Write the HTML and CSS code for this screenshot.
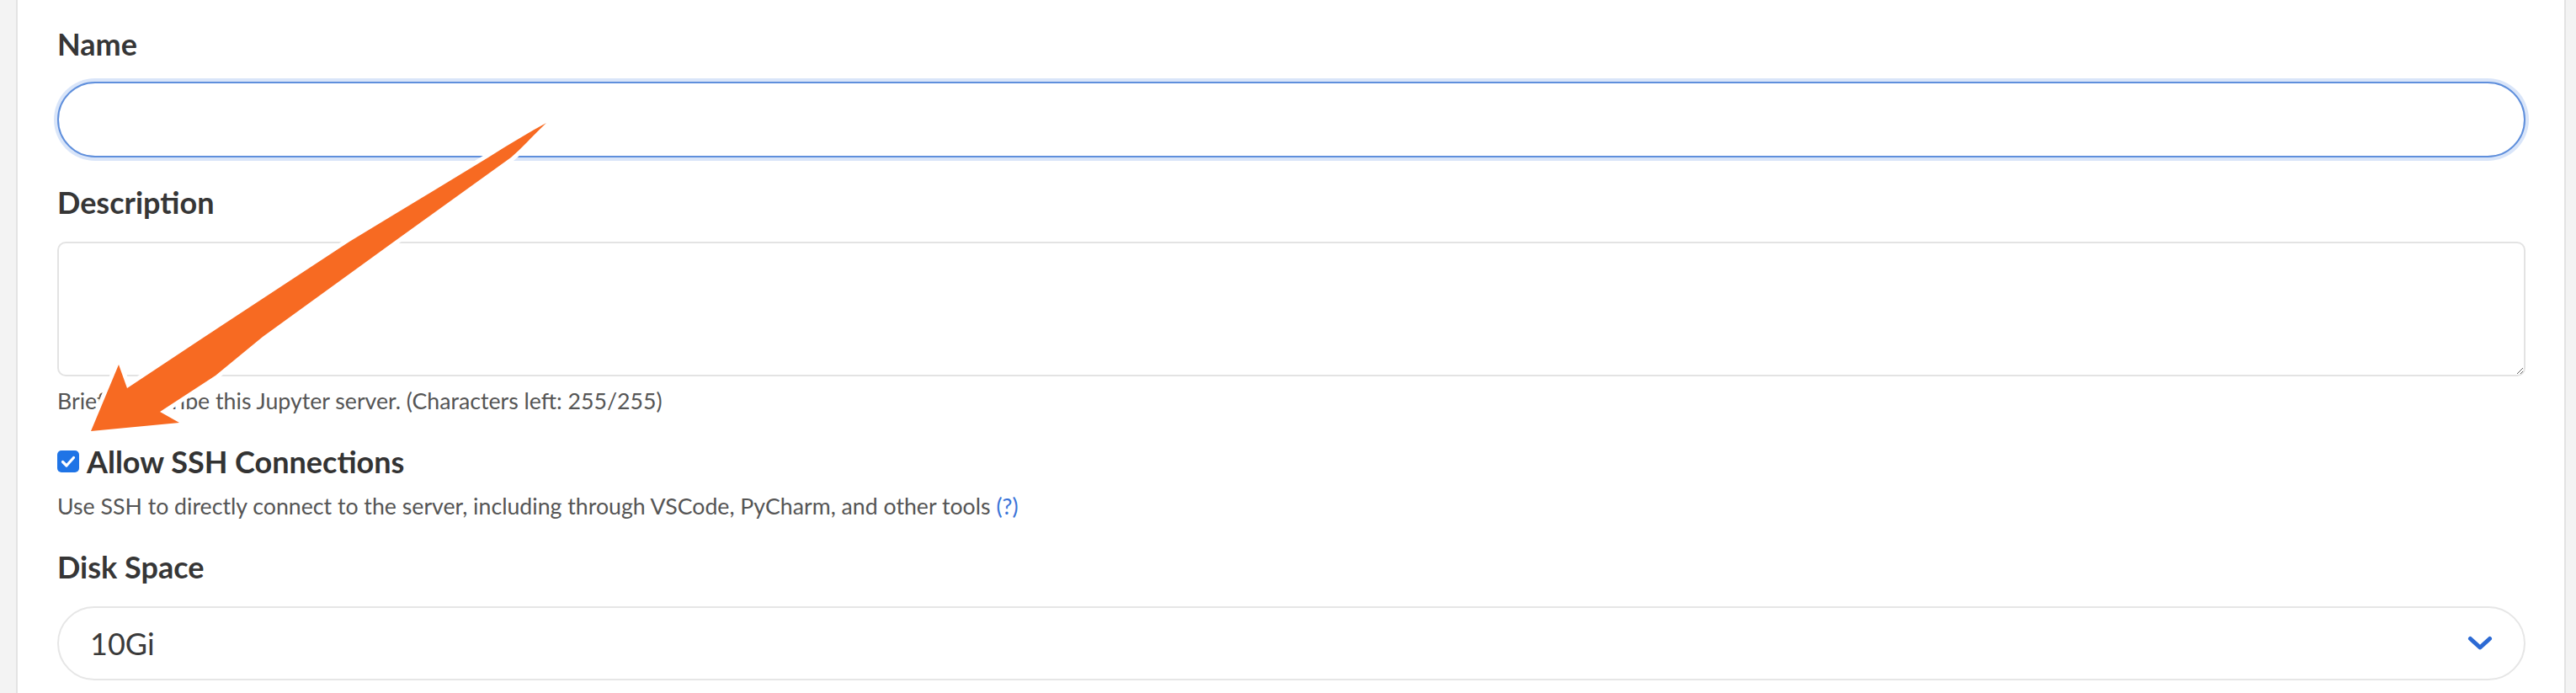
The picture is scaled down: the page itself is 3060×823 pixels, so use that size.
FILE: index.html
```html
<!DOCTYPE html>
<html lang="en">
<head>
<meta charset="utf-8">
<title>New Jupyter server</title>
<link rel="stylesheet" href="styles.css">
</head>
<body>
<div class="page">
  <form class="card">
    <div class="field">
      <label class="label" for="name">Name</label>
      <input id="name" class="text-input" type="text">
    </div>
    <div class="field field-desc">
      <label class="label" for="desc">Description</label>
      <textarea id="desc" class="textarea"></textarea>
      <p class="help">Briefly describe this Jupyter server. (Characters left: 255/255)</p>
    </div>
    <div class="field field-ssh">
      <label class="check-row">
        <span class="checkbox">
          <svg viewBox="0 0 26 26" width="26" height="26"><rect x="0" y="0" width="26" height="26" rx="5" fill="#1f74e6"/><path d="M6.5 13.5 L11 18 L19.5 8.5" fill="none" stroke="#fff" stroke-width="3.2" stroke-linecap="round" stroke-linejoin="round"/></svg>
        </span>
        <span class="check-label">Allow SSH Connections</span>
      </label>
      <p class="help help-ssh">Use SSH to directly connect to the server, including through VSCode, PyCharm, and other tools <a class="help-link">(?)</a></p>
    </div>
    <div class="field field-disk">
      <span class="label">Disk Space</span>
      <div class="select">
        <span class="select-value">10Gi</span>
        <svg class="chevron" viewBox="0 0 30 18" width="30" height="18"><path d="M3.5 3.5 L15 14 L26.5 3.5" fill="none" stroke="#2c6ad4" stroke-width="5" stroke-linecap="round" stroke-linejoin="round"/></svg>
      </div>
    </div>
  </form>
  <svg class="arrow" width="3060" height="823" viewBox="0 0 3060 823">
    <path d="M649 146 C 630 164, 620 176, 607 187 L 468 287 L 312 400 L 256 446 L 190 489 L 213 502 L 108 512 L 141 433 L 151 461 L 243 400 L 415 287 L 580 187 C 607 170, 630 156, 649 146 Z" fill="#f76a22" stroke="#ffffff" stroke-width="10" stroke-linejoin="round" paint-order="stroke"/>
  </svg>
</div>
</body>
</html>
```

FILE: styles.css
```css
* { box-sizing: border-box; }

html, body {
  margin: 0;
  padding: 0;
  height: 100%;
}

body {
  background: #f3f3f3;
  font-family: Lato, "Open Sans", "Liberation Sans", sans-serif;
  color: #333;
  overflow: hidden;
}

.page {
  position: relative;
  height: 823px;
  padding: 0 12px 0 19px;
}

.card {
  height: 100%;
  background: #ffffff;
  border-left: 2px solid #e3e3e3;
  border-right: 2px solid #e3e3e3;
  padding: 30px 46px 0 47px;
  display: flex;
  flex-direction: column;
}

.field {
  display: flex;
  flex-direction: column;
}

.label {
  display: block;
  font-size: 36px;
  line-height: 44px;
  font-weight: 700;
  color: #363636;
  margin-bottom: 23px;
}

.text-input {
  display: block;
  width: 100%;
  height: 90px;
  border: 2px solid #5f8fdc;
  border-radius: 45px;
  box-shadow: 0 0 0 4px rgba(120, 160, 235, 0.28);
  background: #fff;
  outline: none;
  font: inherit;
}

.field-desc {
  margin-top: 31px;
}

.field-desc .label {
  margin-bottom: 25px;
}

.textarea {
  display: block;
  width: 100%;
  height: 160px;
  border: 2px solid #e3e3e3;
  border-radius: 10px;
  background: #fff;
  resize: vertical;
  font: inherit;
  margin: 0;
}

.help {
  margin: 0;
  font-size: 26.7px;
  line-height: 34px;
  color: #555;
}

.field-desc .help {
  margin-top: 12px;
}

.field-ssh {
  margin-top: 33px;
}

.check-row {
  display: flex;
  align-items: center;
  gap: 9px;
  height: 44px;
}

.checkbox {
  display: flex;
  width: 26px;
  height: 26px;
}

.check-label {
  font-size: 36px;
  line-height: 44px;
  font-weight: 700;
  color: #333;
}

.help-ssh {
  margin-top: 14px;
}

.help-link {
  color: #3a74d8;
}

.field-disk {
  margin-top: 33px;
}

.field-disk .label {
  margin-bottom: 25px;
}

.select {
  display: flex;
  align-items: center;
  justify-content: space-between;
  height: 88px;
  border: 2px solid #e6e6e6;
  border-radius: 44px;
  padding: 0 37px 0 37px;
  background: #fff;
}

.select-value {
  font-size: 36px;
  color: #3a3a3a;
}

.chevron {
  display: block;
}

.arrow {
  position: absolute;
  left: 0;
  top: 0;
  pointer-events: none;
}
```
